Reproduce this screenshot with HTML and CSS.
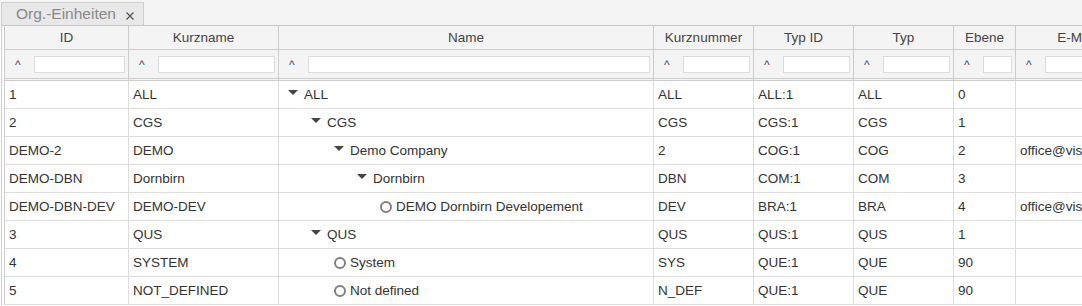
FILE: index.html
```html
<!DOCTYPE html>
<html lang="de">
<head>
    <meta charset="UTF-8">
    <meta name="viewport" content="width=device-width, initial-scale=1.0">
    <title>Org.-Einheiten</title>
    <link rel="stylesheet" href="styles.css">
</head>
<body>
    <div class="tabbar">
        <div class="tab">
            <span class="tab-title">Org.-Einheiten</span>
            <svg class="tab-close" width="10" height="10" viewBox="0 0 10 10">
                <path d="M1.5 1.5 L8.5 8.5 M8.5 1.5 L1.5 8.5" stroke="#555" stroke-width="1.3"/>
            </svg>
        </div>
    </div>

    <div class="grid-wrap">
        <table class="grid">
            <colgroup>
                <col class="c-id">
                <col class="c-kurz">
                <col class="c-name">
                <col class="c-nr">
                <col class="c-typid">
                <col class="c-typ">
                <col class="c-ebene">
                <col class="c-mail">
            </colgroup>
            <thead>
                <tr class="head">
                    <th>ID</th>
                    <th>Kurzname</th>
                    <th>Name</th>
                    <th>Kurznummer</th>
                    <th>Typ ID</th>
                    <th>Typ</th>
                    <th>Ebene</th>
                    <th>E-Mail</th>
                </tr>
                <tr class="filter">
                    <th><div class="f"><span class="caret">^</span><input type="text"></div></th>
                    <th><div class="f"><span class="caret">^</span><input type="text"></div></th>
                    <th><div class="f"><span class="caret">^</span><input type="text"></div></th>
                    <th><div class="f"><span class="caret">^</span><input type="text"></div></th>
                    <th><div class="f"><span class="caret">^</span><input type="text"></div></th>
                    <th><div class="f"><span class="caret">^</span><input type="text"></div></th>
                    <th><div class="f"><span class="caret">^</span><input type="text"></div></th>
                    <th><div class="f"><span class="caret">^</span><input type="text"></div></th>
                </tr>
            </thead>
            <tbody>
                <tr>
                    <td>1</td><td>ALL</td>
                    <td><div class="node lvl0"><span class="open"></span>ALL</div></td>
                    <td>ALL</td><td>ALL:1</td><td>ALL</td><td>0</td><td></td>
                </tr>
                <tr>
                    <td>2</td><td>CGS</td>
                    <td><div class="node lvl1"><span class="open"></span>CGS</div></td>
                    <td>CGS</td><td>CGS:1</td><td>CGS</td><td>1</td><td></td>
                </tr>
                <tr>
                    <td>DEMO-2</td><td>DEMO</td>
                    <td><div class="node lvl2"><span class="open"></span>Demo Company</div></td>
                    <td>2</td><td>COG:1</td><td>COG</td><td>2</td><td>office@visionfactory.at</td>
                </tr>
                <tr>
                    <td>DEMO-DBN</td><td>Dornbirn</td>
                    <td><div class="node lvl3"><span class="open"></span>Dornbirn</div></td>
                    <td>DBN</td><td>COM:1</td><td>COM</td><td>3</td><td></td>
                </tr>
                <tr>
                    <td>DEMO-DBN-DEV</td><td>DEMO-DEV</td>
                    <td><div class="node lvl4"><span class="leaf"></span>DEMO Dornbirn Developement</div></td>
                    <td>DEV</td><td>BRA:1</td><td>BRA</td><td>4</td><td>office@visionfactory.at</td>
                </tr>
                <tr>
                    <td>3</td><td>QUS</td>
                    <td><div class="node lvl1"><span class="open"></span>QUS</div></td>
                    <td>QUS</td><td>QUS:1</td><td>QUS</td><td>1</td><td></td>
                </tr>
                <tr>
                    <td>4</td><td>SYSTEM</td>
                    <td><div class="node lvl2"><span class="leaf"></span>System</div></td>
                    <td>SYS</td><td>QUE:1</td><td>QUE</td><td>90</td><td></td>
                </tr>
                <tr>
                    <td>5</td><td>NOT_DEFINED</td>
                    <td><div class="node lvl2"><span class="leaf"></span>Not defined</div></td>
                    <td>N_DEF</td><td>QUE:1</td><td>QUE</td><td>90</td><td></td>
                </tr>
            </tbody>
        </table>
    </div>
</body>
</html>
```

FILE: styles.css
```css
* {
    margin: 0;
    padding: 0;
    box-sizing: border-box;
}
html, body {
    width: 1082px;
    height: 306px;
    overflow: hidden;
    background-color: #fff;
    font-family: Arial, "Liberation Sans", sans-serif;
    font-size: 13.5px;
    color: #333;
}

/* tab strip on top */
.tabbar {
    height: 25px;
    padding-top: 2px;
    padding-left: 1px;
    background-color: #f4f4f4;
    display: flex;
    align-items: flex-end;
}
.tab {
    width: 143px;
    height: 23px;
    background-color: #e8e8e8;
    border: 1px solid #cfcfcf;
    border-bottom: none;
    display: flex;
    align-items: center;
    padding-left: 14px;
}
.tab-title {
    color: #888;
    font-size: 15.5px;
}
.tab-close {
    margin-left: 9px;
    margin-top: 4px;
}

/* grid */
.grid-wrap {
    border-top: 1px solid #c8c8c8;
    border-left: 1px solid #cfcfcf;
    margin-left: 1px;
    padding-left: 2px;
    overflow: hidden;
    height: 281px;
}
.grid {
    table-layout: fixed;
    border-collapse: separate;
    border-spacing: 0;
    width: 1133px;
    border-left: 1px solid #ccc;
}
.c-id { width: 124px; }
.c-kurz { width: 150px; }
.c-name { width: 375px; }
.c-nr { width: 100px; }
.c-typid { width: 100px; }
.c-typ { width: 100px; }
.c-ebene { width: 62px; }
.c-mail { width: 122px; }

.grid th {
    background-color: #f4f4f4;
    font-weight: normal;
    color: #444;
    border-right: 1px solid #ccc;
    border-bottom: 1px solid #ccc;
}
.head th {
    height: 24px;
    text-align: center;
    white-space: nowrap;
}
.filter th {
    height: 31px;
    border-bottom: 3px double #ccc;
}
.f {
    display: flex;
    align-items: center;
    padding: 0 3px 0 10px;
}
.caret {
    width: 19px;
    text-align: left;
    font-size: 12px;
    color: #4a4a6a;
    margin-top: 2px;
}
.f input {
    flex: 1;
    min-width: 0;
    height: 17px;
    border: 1px solid #dcdcdc;
    background-color: #fff;
    outline: none;
}

.grid td {
    height: 28px;
    padding-left: 4px;
    white-space: nowrap;
    overflow: hidden;
    border-right: 1px solid #ddd;
    border-bottom: 1px solid #ddd;
    color: #333;
}

/* tree column */
.node {
    display: flex;
    align-items: center;
}
.lvl0 { padding-left: 5px; }
.lvl1 { padding-left: 28px; }
.lvl2 { padding-left: 51px; }
.lvl3 { padding-left: 74px; }
.lvl4 { padding-left: 97px; }
.open,
.leaf {
    width: 16px;
    height: 10px;
    flex-shrink: 0;
    position: relative;
}
.open::before {
    content: "";
    position: absolute;
    left: 0;
    top: 0;
    border-left: 5px solid transparent;
    border-right: 5px solid transparent;
    border-top: 5px solid #444;
}
.leaf::before {
    content: "";
    position: absolute;
    left: 0;
    top: -1px;
    width: 8px;
    height: 8px;
    border: 2px solid #808080;
    border-radius: 50%;
}
```
